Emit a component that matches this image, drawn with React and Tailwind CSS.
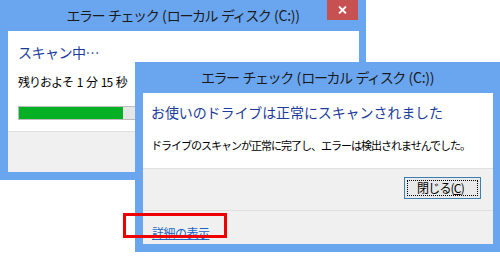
function Title() {
  return (
    <div className="h-[31px] flex items-center justify-center text-[14px] tracking-[-1.4px] [word-spacing:2px] text-[#1a1a1a]">
      <span>
        エラー チェック <span className="tracking-[0px]">(</span>ローカル ディスク{" "}
        <span className="tracking-[-0.3px]">(C:))</span>
      </span>
    </div>
  );
}

export default function App() {
  const font = { fontFamily: '"Noto Sans CJK JP", "Noto Sans", sans-serif' };
  return (
    <div
      className="relative w-[500px] h-[260px] bg-white overflow-hidden text-black"
      style={font}
    >
      {/* Window 1 */}
      <div className="absolute left-0 top-0 w-[366px] h-[180px] bg-[#6aa6ef] flex flex-col">
        <Title />
        <div className="absolute right-[8px] top-0 w-[31px] h-[20px] bg-[#c75050] flex items-center justify-center">
          <svg width="9" height="8" viewBox="0 0 9 8">
            <path d="M1 0.5 L8 7.5 M8 0.5 L1 7.5" stroke="white" strokeWidth="1.8" />
          </svg>
        </div>
        <div className="flex-1 ml-[8px] mr-[7px] mb-[8px] flex flex-col">
          <div className="h-[100px] bg-white px-[10px] pt-[10px]">
            <div className="text-[14px] leading-[22px] tracking-[-0.5px] text-[#1c3c9c]">
              スキャン中…
            </div>
            <div className="mt-[11px] text-[12px] leading-[16px] tracking-[-1px] [word-spacing:2px]">
              残りおよそ 1 分 15 秒
            </div>
            <div className="mt-[16px] h-[14px] border border-[#bcbcbc] bg-[#e6e6e6]">
              <div className="h-full w-[104px] bg-[#06b025]" />
            </div>
          </div>
          <div className="flex-1 bg-[#f0f0f0] border-t border-[#dfdfdf]" />
        </div>
      </div>

      {/* Window 2 */}
      <div className="absolute left-[135px] top-[62px] w-[365px] h-[190px] bg-[#6aa6ef] flex flex-col">
        <Title />
        <div className="flex-1 ml-[8px] mr-[7px] mb-[8px] flex flex-col">
          <div className="h-[75px] bg-white px-[8px] pt-[8px]">
            <div className="text-[14px] leading-[22px] tracking-[-0.1px] text-[#1c3c9c]">
              お使いのドライブは正常にスキャンされました
            </div>
            <div className="mt-[14px] text-[11px] leading-[16px] tracking-[-1px]">
              ドライブのスキャンが正常に完了し、エラーは検出されませんでした。
            </div>
          </div>
          <div className="h-[42px] bg-[#f0f0f0] border-t border-[#dfdfdf] flex justify-end items-start pt-[8px] pr-[12px]">
            <div className="w-[77px] h-[22px] border border-[#3c7fb1] bg-[#e9e9e9] p-[2px]">
              <div className="w-full h-full border border-dotted border-black flex items-center justify-center text-[12px] tracking-[-0.8px] leading-none pr-[4px]">
                閉じる(<span className="underline">C</span>)
              </div>
            </div>
          </div>
          <div className="flex-1 bg-[#f0f0f0] border-t border-[#dfdfdf] pl-[9px] pt-[8px]">
            <span className="text-[12px] leading-[16px] tracking-[-0.5px] text-[#1a66c7] underline">
              詳細の表示
            </span>
          </div>
        </div>
      </div>

      {/* Red highlight */}
      <div className="absolute left-[123px] top-[213px] w-[104px] h-[25px] border-[3px] border-[#ee0000]" />
    </div>
  );
}
